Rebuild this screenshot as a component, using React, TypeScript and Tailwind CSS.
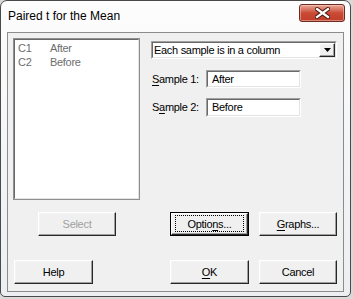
import React from "react";

const font = "font-['Tahoma','Liberation_Sans',sans-serif]";

function Bevel({ children, className = "" }: { children?: React.ReactNode; className?: string }) {
  return (
    <div
      className={`border-t border-l border-t-white border-l-white border-r border-b border-r-[#262626] border-b-[#262626] shadow-[inset_-1px_-1px_#a0a0a0,inset_1px_1px_#f4f4f4] bg-[#f0f0f0] ${className}`}
    >
      {children}
    </div>
  );
}

function Btn({
  w,
  children,
  disabled,
  def,
}: {
  w: string;
  children: React.ReactNode;
  disabled?: boolean;
  def?: boolean;
}) {
  if (def) {
    return (
      <div className={`relative h-[24px] border border-black ${w}`}>
        <Bevel className="h-full w-full flex items-center justify-center text-[11px] tracking-[-0.3px] text-black">
          {children}
        </Bevel>
        <div className="absolute left-[4px] top-[2px] right-[4px] bottom-[3px] border border-dotted border-black pointer-events-none" />
      </div>
    );
  }
  return (
    <Bevel
      className={`h-[24px] ${w} flex items-center justify-center text-[11px] tracking-[-0.3px] ${
        disabled ? "text-[#a0a0a0]" : "text-black"
      }`}
    >
      {children}
    </Bevel>
  );
}

function Sunken({ children, className = "" }: { children?: React.ReactNode; className?: string }) {
  return (
    <div
      className={`border-t border-l border-t-[#a0a0a0] border-l-[#a0a0a0] border-r border-b border-r-white border-b-white ${className}`}
    >
      <div className="h-full w-full border-t border-l border-t-[#696969] border-l-[#696969] border-r border-b border-r-[#e3e3e3] border-b-[#e3e3e3] bg-white">
        {children}
      </div>
    </div>
  );
}

export default function App() {
  return (
    <div className={`w-[353px] h-[299px] bg-[#d9d9d9] overflow-hidden ${font}`}>
      <div className="w-[351px] h-[297px] rounded-t-[7px] rounded-b-[5px] border border-[#4a4a4a] bg-gradient-to-b from-[#fdfdfd] via-[#f4f5f7] to-[#eceef1] flex flex-col">
        {/* Title bar */}
        <div className="h-[31px] flex items-start pl-[7px] shrink-0">
          <div className="mt-[8px] text-[12px] leading-[15px] text-black font-['Liberation_Sans',sans-serif]">
            Paired t for the Mean
          </div>
          <div className="ml-auto mt-[3px] mr-[5px] w-[46px] h-[18px] rounded-[3px] border border-[#6b2a22] bg-gradient-to-b from-[#e9a898] via-[#c94a36] to-[#c23e28] shadow-[inset_0_0_0_1px_rgba(255,220,210,0.45)] flex items-center justify-center">
            <svg width="15" height="12" viewBox="0 0 15 12">
              <path d="M2 2 L13 10 M13 2 L2 10" stroke="#4a1a14" strokeWidth="4.2" strokeLinecap="square" fill="none" />
              <path d="M2 2 L13 10 M13 2 L2 10" stroke="#ffffff" strokeWidth="2.2" strokeLinecap="square" fill="none" />
            </svg>
          </div>
        </div>
        {/* Client area */}
        <div className="mx-[6px] h-[260px] border border-[#8c8c8c] bg-[#f0f0f0] flex flex-col text-[11px] tracking-[-0.3px]">
          <div className="flex pl-[5px] pt-[5px]">
            {/* List box */}
            <div className="w-[127px] h-[162px] border border-[#8f8f8f]">
              <div className="w-full h-full border-t border-l border-t-[#696969] border-l-[#696969] border-r border-b border-r-[#e3e3e3] border-b-[#e3e3e3] bg-white pl-[3px] pt-[1px] text-[#6d6d6d] leading-[14px]">
                <div className="flex">
                  <span className="w-[32px]">C1</span>
                  <span>After</span>
                </div>
                <div className="flex">
                  <span className="w-[32px]">C2</span>
                  <span>Before</span>
                </div>
              </div>
            </div>
            {/* Right column */}
            <div className="ml-[11px] pt-[3px] flex flex-col">
              <Sunken className="w-[186px] h-[18px]">
                <div className="flex h-full items-center">
                  <span className="pl-[1px] text-black leading-[14px] flex-1">Each sample is in a column</span>
                  <Bevel className="w-[16px] h-full flex items-center justify-center">
                    <svg width="7" height="4" viewBox="0 0 7 4">
                      <polygon points="0,0 7,0 3.5,4" fill="#000" />
                    </svg>
                  </Bevel>
                </div>
              </Sunken>
              <div className="flex items-center mt-[11px]">
                <span className="w-[55px] pl-[1px] text-black">
                  <u className="underline-offset-[2px]">S</u>ample 1:
                </span>
                <Sunken className="w-[95px] h-[18px]">
                  <div className="pl-[4px] text-black leading-[15px]">After</div>
                </Sunken>
              </div>
              <div className="flex items-center mt-[10px]">
                <span className="w-[55px] pl-[1px] text-black">
                  S<u className="underline-offset-[2px]">a</u>mple 2:
                </span>
                <Sunken className="w-[95px] h-[19px]">
                  <div className="pl-[4px] text-black leading-[15px]">Before</div>
                </Sunken>
              </div>
            </div>
          </div>
          {/* Buttons row 1 */}
          <div className="flex mt-[12px] pl-[30px]">
            <Btn w="w-[78px]" disabled>
              Select
            </Btn>
            <div className="ml-[54px]">
              <Btn w="w-[79px]" def>
                <span>
                  Optio<u className="underline-offset-[2px]">n</u>s...
                </span>
              </Btn>
            </div>
            <div className="ml-[10px]">
              <Btn w="w-[78px]">
                <span>
                  <u className="underline-offset-[2px]">G</u>raphs...
                </span>
              </Btn>
            </div>
          </div>
          {/* Buttons row 2 */}
          <div className="flex mt-[24px] pl-[6px]">
            <Btn w="w-[79px]">Help</Btn>
            <div className="ml-[77px]">
              <Btn w="w-[79px]">
                <span>
                  <u className="underline-offset-[2px]">O</u>K
                </span>
              </Btn>
            </div>
            <div className="ml-[10px]">
              <Btn w="w-[78px]">Cancel</Btn>
            </div>
          </div>
        </div>
      </div>
    </div>
  );
}
